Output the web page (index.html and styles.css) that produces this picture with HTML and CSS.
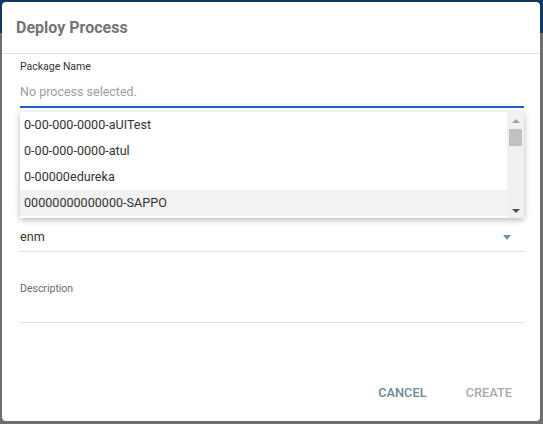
FILE: index.html
```html
<!DOCTYPE html>
<html>
<head>
<meta charset="utf-8">
<link rel="stylesheet" href="styles.css">
</head>
<body>
<div class="dialog">
  <div class="header">Deploy Process</div>
  <div class="content">
    <div class="field pkg">
      <div class="label">Package Name</div>
      <div class="input placeholder">No process selected.</div>
      <div class="menu">
        <div class="items">
          <div class="item">0-00-000-0000-aUITest</div>
          <div class="item">0-00-000-0000-atul</div>
          <div class="item">0-00000edureka</div>
          <div class="item active">00000000000000-SAPPO</div>
        </div>
        <div class="scrollbar">
          <div class="arrow up"></div>
          <div class="thumb"></div>
          <div class="spacer"></div>
          <div class="arrow down"></div>
        </div>
      </div>
    </div>
    <div class="field select">
      <div class="value">enm</div>
      <div class="caret"></div>
    </div>
    <div class="field desc">
      <div class="label light">Description</div>
      <div class="area"></div>
    </div>
  </div>
  <div class="footer">
    <button class="btn cancel">CANCEL</button>
    <button class="btn create">CREATE</button>
  </div>
</div>
</body>
</html>
```
FILE: styles.css
```css
html, body {
  margin: 0;
  padding: 0;
}
body {
  width: 543px;
  height: 424px;
  overflow: hidden;
  background: linear-gradient(to bottom, #0e3862 0, #0e3862 33px, #6e6e6e 33px, #6e6e6e 100%);
  font-family: Roboto, "Liberation Sans", Arial, sans-serif;
  padding: 2px 3px 3px 2px;
  box-sizing: border-box;
}
.dialog {
  width: 538px;
  height: 419px;
  background: #fff;
  border-radius: 4px;
  display: flex;
  flex-direction: column;
}
.header {
  height: 51px;
  border-bottom: 1px solid #e3e3e3;
  padding-left: 14px;
  font-size: 16px;
  font-weight: 700;
  color: #747474;
  line-height: 52px;
}
.content {
  padding: 0 16px 0 18px;
  flex: 1;
}
.field {
  position: relative;
}
.label {
  font-size: 10.5px;
  line-height: 13px;
  color: #333;
}
.label.light {
  color: #6b6b6b;
}
.pkg {
  padding-top: 6px;
}
.input {
  margin-top: 9px;
  height: 20px;
  line-height: 20px;
  font-size: 12.5px;
  padding-bottom: 4px;
  border-bottom: 2px solid #1565c0;
}
.placeholder {
  color: #9e9e9e;
}
.menu {
  position: absolute;
  top: 58px;
  left: 0;
  right: 0;
  height: 106px;
  background: #fff;
  box-shadow: 0 2px 6px rgba(0, 0, 0, 0.28);
  display: flex;
  z-index: 2;
}
.items {
  flex: 1;
  padding-bottom: 2px;
}
.item {
  height: 26px;
  line-height: 26px;
  padding-left: 4px;
  font-size: 12.6px;
  color: #333;
}
.item.active {
  background: #f2f2f2;
}
.scrollbar {
  width: 17px;
  background: #f1f1f1;
  display: flex;
  flex-direction: column;
  align-items: center;
}
.arrow {
  width: 0;
  height: 0;
  border-left: 4px solid transparent;
  border-right: 4px solid transparent;
}
.arrow.up {
  margin-top: 7px;
  border-bottom: 4px solid #a3a3a3;
}
.arrow.down {
  margin-bottom: 5px;
  border-top: 4px solid #505050;
}
.thumb {
  margin-top: 6px;
  width: 13px;
  height: 17px;
  background: #c1c1c1;
}
.spacer {
  flex: 1;
}
.select {
  margin-top: 119px;
  height: 20px;
  padding-bottom: 4px;
  border-bottom: 1px solid #e0e0e0;
  display: flex;
  align-items: center;
  justify-content: space-between;
}
.value {
  font-size: 12.6px;
  line-height: 20px;
  color: #333;
}
.caret {
  width: 0;
  height: 0;
  margin-right: 13px;
  border-left: 4.5px solid transparent;
  border-right: 4.5px solid transparent;
  border-top: 5px solid #6f8ea5;
}
.desc {
  margin-top: 30px;
}
.area {
  height: 27px;
  border-bottom: 1px solid #e0e0e0;
}
.footer {
  display: flex;
  justify-content: flex-end;
  gap: 15px;
  padding: 0 16px 13px 0;
}
.btn {
  background: none;
  border: none;
  font-family: Roboto, "Liberation Sans", Arial, sans-serif;
  font-size: 12.8px;
  font-weight: 500;
  line-height: 14px;
  padding: 8px 12px;
  margin: 0;
}
.cancel {
  color: #6d879b;
}
.create {
  color: #aaaaaa;
}
```
